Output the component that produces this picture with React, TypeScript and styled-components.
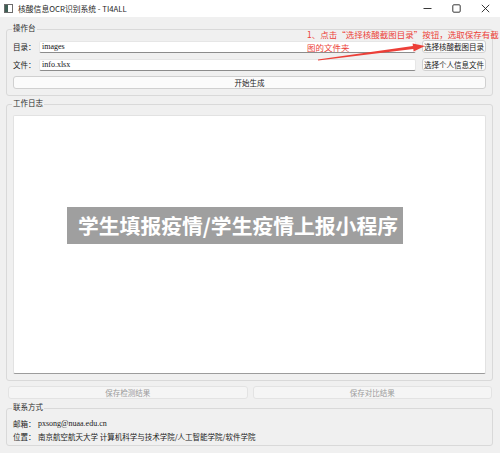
import React from "react";
import styled, { createGlobalStyle } from "styled-components";

const GlobalStyle = createGlobalStyle`
  html, body {
    margin: 0;
    padding: 0;
    background: #f0f0f0;
    overflow: hidden;
  }
  body {
    font-family: "Noto Sans CJK SC", "Noto Sans", sans-serif;
    color: #1a1a1a;
  }
  * { box-sizing: border-box; }
`;

const Window = styled.div`
  position: relative;
  width: 500px;
  height: 453px;
  background: #f0f0f0;
  display: flex;
  flex-direction: column;
  overflow: hidden;
`;

const TitleBar = styled.div`
  height: 17px;
  flex: none;
  background: #ffffff;
  display: flex;
  align-items: center;
  padding-left: 4px;
`;

const TitleText = styled.span`
  margin-left: 5px;
  font-size: 7.8px;
  line-height: 17px;
  color: #1f1f1f;
  white-space: nowrap;
`;

const WinControls = styled.div`
  margin-left: auto;
  display: flex;
  height: 17px;
`;

const CtrlButton = styled.div`
  width: 29px;
  height: 17px;
  display: flex;
  align-items: center;
  justify-content: center;
`;

const Body = styled.div`
  flex: 1;
  display: flex;
  flex-direction: column;
  padding: 6px 7px 0 6px;
`;

const Group = styled.fieldset<{ $pad?: string }>`
  margin: 0;
  min-width: 0;
  border: 1px solid #d9d9d9;
  border-radius: 3px;
  padding: ${(p) => p.$pad ?? "5px 6px 6px 6px"};
`;

const GroupTitle = styled.legend`
  font-size: 7.5px;
  line-height: 10px;
  padding: 0 1px 2px;
  margin-left: -1px;
  color: #2b2b2b;
`;

const Stack = styled.div`
  display: flex;
  flex-direction: column;
  gap: 6px;
`;

const FieldRow = styled.div`
  display: grid;
  grid-template-columns: 20px 1fr 64px;
  column-gap: 6px;
  align-items: center;
  height: 12px;
`;

const FieldLabel = styled.span`
  font-size: 7.5px;
  line-height: 12px;
  color: #1a1a1a;
  white-space: nowrap;
`;

const TextField = styled.input`
  width: 100%;
  height: 12px;
  margin: 0;
  padding: 0 2px;
  border: 1px solid #e6e6e6;
  border-bottom-color: #8c8c8c;
  border-radius: 2px;
  background: #ffffff;
  font-family: "Liberation Serif", serif;
  font-size: 8px;
  line-height: 10px;
  color: #111;
  outline: none;
`;

const PushButton = styled.button`
  height: 13px;
  width: 100%;
  margin: 0;
  padding: 0;
  border: 1px solid #d0d0d0;
  border-radius: 3px;
  background: #fbfbfb;
  font-family: "Noto Sans CJK SC", sans-serif;
  font-size: 7.5px;
  line-height: 11px;
  color: #1a1a1a;
  white-space: nowrap;
  cursor: default;
`;

const LogGroup = styled(Group)`
  margin-top: 2px;
`;

const LogArea = styled.div`
  height: 259px;
  background: #ffffff;
  border: 1px solid #e2e2e2;
  border-bottom-color: #9c9c9c;
  border-radius: 2px;
`;

const SaveRow = styled.div`
  display: grid;
  grid-template-columns: 1fr 1fr;
  column-gap: 5px;
  margin: 5px 1px 0 2px;
`;

const SaveButton = styled.button`
  height: 13px;
  margin: 0;
  padding: 0;
  border: 1px solid #e3e3e3;
  border-radius: 3px;
  background: #f5f5f5;
  font-family: "Noto Sans CJK SC", sans-serif;
  font-size: 7.5px;
  line-height: 11px;
  color: #9c9c9c;
  cursor: default;
`;

const ContactGroup = styled(Group)`
  margin-top: 3px;
`;

const InfoRow = styled.div`
  display: flex;
  align-items: center;
  height: 13px;
  font-size: 7.5px;
  white-space: nowrap;
`;

const InfoLabel = styled.span`
  width: 25px;
  flex: none;
`;

const Email = styled.span`
  font-family: "Liberation Serif", serif;
  font-size: 8px;
`;

const Banner = styled.div`
  position: absolute;
  left: 67px;
  top: 207px;
  width: 336px;
  height: 37px;
  padding-left: 11px;
  background: #9f9f9f;
  color: #ffffff;
  font-family: "Noto Sans CJK SC", sans-serif;
  font-weight: 700;
  font-size: 20.8px;
  line-height: 37px;
  white-space: nowrap;
  overflow: hidden;
`;

const Note = styled.div`
  position: absolute;
  left: 307px;
  top: 28px;
  color: #ec3f38;
  font-size: 8.5px;
  line-height: 13px;
  white-space: nowrap;
`;

const NoteLine = styled.div``;

const ArrowLayer = styled.svg`
  position: absolute;
  left: 0;
  top: 0;
  pointer-events: none;
`;

const AppIcon = () => (
  <svg width="9" height="9" viewBox="0 0 9 9">
    <rect x="0.5" y="0.5" width="8" height="8" fill="#ffffff" stroke="#6c6c6c" />
    <rect x="1" y="1" width="3" height="7" fill="#3f5f55" />
  </svg>
);

const MinIcon = () => (
  <svg width="9" height="9" viewBox="0 0 9 9">
    <line x1="0.5" y1="4.5" x2="8.5" y2="4.5" stroke="#222" strokeWidth="0.9" />
  </svg>
);

const MaxIcon = () => (
  <svg width="9" height="9" viewBox="0 0 9 9">
    <rect x="0.8" y="0.8" width="7.4" height="7.4" rx="1" fill="none" stroke="#222" strokeWidth="0.9" />
  </svg>
);

const CloseIcon = () => (
  <svg width="9" height="9" viewBox="0 0 9 9">
    <path d="M0.8 0.8 L8.2 8.2 M8.2 0.8 L0.8 8.2" stroke="#222" strokeWidth="0.9" />
  </svg>
);

export default function App() {
  return (
    <>
      <GlobalStyle />
      <Window>
        <TitleBar>
          <AppIcon />
          <TitleText>核酸信息OCR识别系统 - TI4ALL</TitleText>
          <WinControls>
            <CtrlButton><MinIcon /></CtrlButton>
            <CtrlButton><MaxIcon /></CtrlButton>
            <CtrlButton><CloseIcon /></CtrlButton>
          </WinControls>
        </TitleBar>

        <Body>
          <Group>
            <GroupTitle>操作台</GroupTitle>
            <Stack>
              <FieldRow>
                <FieldLabel>目录：</FieldLabel>
                <TextField readOnly value="images" />
                <PushButton>选择核酸截图目录</PushButton>
              </FieldRow>
              <FieldRow>
                <FieldLabel>文件：</FieldLabel>
                <TextField readOnly value="info.xlsx" />
                <PushButton>选择个人信息文件</PushButton>
              </FieldRow>
              <PushButton>开始生成</PushButton>
            </Stack>
          </Group>

          <LogGroup>
            <GroupTitle>工作日志</GroupTitle>
            <LogArea />
          </LogGroup>

          <SaveRow>
            <SaveButton disabled>保存检测结果</SaveButton>
            <SaveButton disabled>保存对比结果</SaveButton>
          </SaveRow>

          <ContactGroup $pad="3px 6px 2px 6px">
            <GroupTitle>联系方式</GroupTitle>
            <InfoRow>
              <InfoLabel>邮箱：</InfoLabel>
              <Email>pxsong@nuaa.edu.cn</Email>
            </InfoRow>
            <InfoRow>
              <InfoLabel>位置：</InfoLabel>
              <span>南京航空航天大学 计算机科学与技术学院/人工智能学院/软件学院</span>
            </InfoRow>
          </ContactGroup>
        </Body>

        <Note>
          <NoteLine>1、点击“选择核酸截图目录”按钮，选取保存有截</NoteLine>
          <NoteLine>图的文件夹</NoteLine>
        </Note>

        <ArrowLayer width="500" height="453" viewBox="0 0 500 453">
          <polygon
            points="318.1,60.5 413.3,49.1 413.6,51.5 425,46 412.6,43.6 412.9,46.1 317.9,59.5"
            fill="#ec3f38"
          />
        </ArrowLayer>

        <Banner>学生填报疫情/学生疫情上报小程序</Banner>
      </Window>
    </>
  );
}
